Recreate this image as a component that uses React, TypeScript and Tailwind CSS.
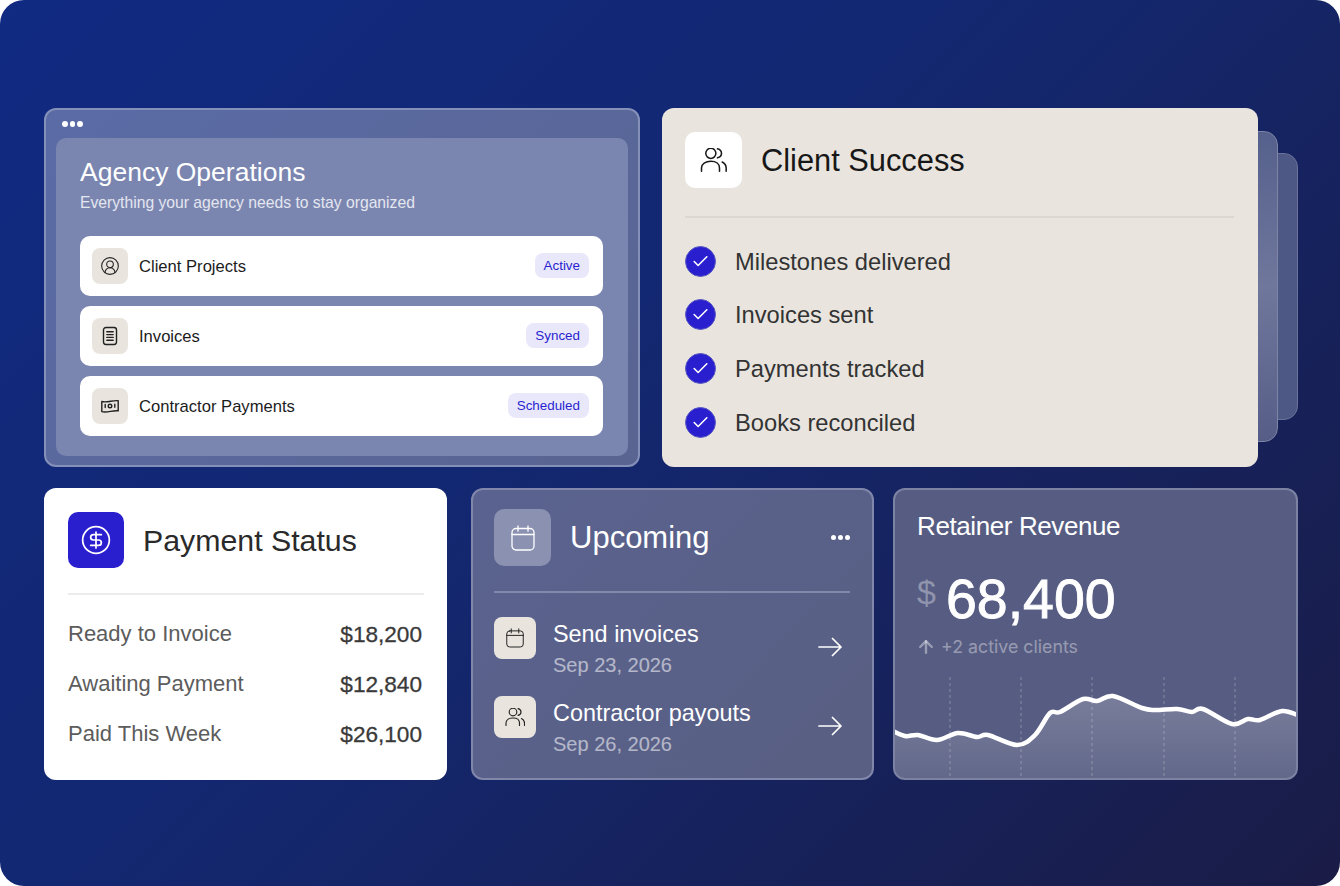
import { ArrowUp, Check, CircleDollarSign, CircleUserRound } from "lucide-react";
import type { ReactNode } from "react";

const font = { sans: "font-['Liberation_Sans',Arial,sans-serif]" };

const chartPoints: [number, number][] = [
  [891, 732], [905, 738], [918, 737], [937, 742], [958, 735], [977, 739], [988, 737], [1017, 747],
  [1035, 737], [1050, 715], [1060, 714], [1083, 701], [1097, 703], [1113, 698], [1142, 710],
  [1155, 712], [1177, 711], [1192, 714], [1203, 711], [1232, 726], [1248, 721], [1260, 722],
  [1282, 713], [1300, 718],
];

// catmull-rom through the points so the line stays soft
const smooth = (pts: [number, number][]) => {
  let d = `M${pts[0][0]} ${pts[0][1]}`;
  for (let i = 0; i < pts.length - 1; i++) {
    const p0 = pts[i - 1] ?? pts[i];
    const p1 = pts[i];
    const p2 = pts[i + 1];
    const p3 = pts[i + 2] ?? p2;
    const c1x = p1[0] + (p2[0] - p0[0]) / 6;
    const c1y = p1[1] + (p2[1] - p0[1]) / 6;
    const c2x = p2[0] - (p3[0] - p1[0]) / 6;
    const c2y = p2[1] - (p3[1] - p1[1]) / 6;
    d += ` C${c1x} ${c1y} ${c2x} ${c2y} ${p2[0]} ${p2[1]}`;
  }
  return d;
};

const linePath = smooth(chartPoints);

const DocIcon = () => (
  <svg width="20" height="20" viewBox="0 0 20 20" fill="none" stroke="#222" strokeWidth="1.4" strokeLinecap="round">
    <rect x="3.500" y="1.500" width="13" height="17" rx="2.400" />
    <path d="M6.800 5.800h6.400M6.800 8.600h6.400M6.800 11.400h6.400M6.800 14.200h6.400" />
  </svg>
);

const CashIcon = () => (
  <svg width="20" height="20" viewBox="0 0 20 20" fill="none" stroke="#222" strokeWidth="1.4" strokeLinecap="round" strokeLinejoin="round">
    <path d="M1.800 5.500c5.300 1.500 11-1.500 16.400-.8v10.200c-5.400-.8-11.100 2.100-16.400.7z" />
    <circle cx="10" cy="10" r="1.800" />
    <path d="M5.200 8.500v3M14.800 8.200v3" />
  </svg>
);

const UsersIcon = ({ width, height, color }: { width: number; height: number; color: string }) => (
  <svg width={width} height={height} viewBox="0 0 20 18" fill="none" stroke={color} strokeWidth="1.150" strokeLinecap="round" strokeLinejoin="round">
    <ellipse cx="8" cy="4" rx="3.800" ry="3.800" />
    <path d="M13 .6C15 1.100 16 2.500 16 4S15 6.900 13 7.400" />
    <path d="M1 17.400V15c0-3 3-5 7-5s6.500 2 6.500 5v2.400" />
    <path d="M16.500 10.500c2 1 3 2.500 3 4.500v2.400" />
  </svg>
);

const CalendarIcon = ({ width, height, color }: { width: number; height: number; color: string }) => (
  <svg width={width} height={height} viewBox="0 0 24 26" fill="none" stroke={color} strokeWidth="1.300" strokeLinecap="round" strokeLinejoin="round">
    <rect x="1" y="3.500" width="22" height="21.500" rx="4" />
    <path d="M1 9.500h22M7 .8v5.400M17 .8v5.400" />
  </svg>
);

const ArrowIcon = () => (
  <svg width="24" height="20" viewBox="0 0 24 20" fill="none" stroke="white" strokeWidth="1.7" strokeLinecap="round" strokeLinejoin="round">
    <path d="M1 10h22M14.500 1.500 23 10l-8.500 8.500" />
  </svg>
);

const Dots = ({ className }: { className: string }) => (
  <div className={`flex ${className}`}>
    <span className="size-[5.500px] rounded-full bg-white" />
    <span className="size-[5.500px] rounded-full bg-white" />
    <span className="size-[5.500px] rounded-full bg-white" />
  </div>
);

const projects: { name: string; badge: string; icon: ReactNode }[] = [
  { name: "Client Projects", badge: "Active", icon: <CircleUserRound size={20} strokeWidth={1.3} color="#222" /> },
  { name: "Invoices", badge: "Synced", icon: <DocIcon /> },
  { name: "Contractor Payments", badge: "Scheduled", icon: <CashIcon /> },
];

const checks = ["Milestones delivered", "Invoices sent", "Payments tracked", "Books reconciled"];

const payments = [
  { label: "Ready to Invoice", value: "$18,200" },
  { label: "Awaiting Payment", value: "$12,840" },
  { label: "Paid This Week", value: "$26,100" },
];

const upcoming = [
  { title: "Send invoices", date: "Sep 23, 2026", icon: <CalendarIcon width={18} height={20} color="#222" /> },
  { title: "Contractor payouts", date: "Sep 26, 2026", icon: <UsersIcon width={20} height={18} color="#222" /> },
];

export default function App() {
  return (
    <div className="w-[1340px] h-[886px] bg-white">
      <div className={`w-full h-full rounded-[24px] overflow-hidden bg-[linear-gradient(135deg,#112a82_0%,#132872_42%,#1a1c46_100%)] pt-[108px] pl-[44px] ${font.sans}`}>
        <div className="flex gap-[22px]">
          <section className="w-[596px] h-[359px] rounded-[12px] border-2 border-[#8490b8] bg-[linear-gradient(135deg,#5a6ba6,#596491)] px-[10px] pt-[5px]">
            <Dots className="gap-[2px] ml-[6px] mt-[6px] mb-[11px]" />
            <div className="h-[318px] rounded-[10px] bg-[#7a85b0] pl-[24px] pr-[25px] pt-[18px]">
              <h2 className="text-[26.500px] leading-[32px] text-white">Agency Operations</h2>
              <p className="mt-[5px] text-[15.700px] leading-[20px] text-white/80">Everything your agency needs to stay organized</p>
              <div className="mt-[23px] flex flex-col gap-[10px]">
                {projects.map((p) => (
                  <div key={p.name} className="h-[60px] rounded-[10px] bg-white flex items-center pl-[12px] pr-[14px]">
                    <div className="size-[36px] rounded-[8px] bg-[#e9e5de] flex items-center justify-center">{p.icon}</div>
                    <span className="ml-[11px] pt-[3px] text-[16.600px] text-[#1c1c1c]">{p.name}</span>
                    <span className="ml-auto h-[25px] rounded-[8px] bg-[#e9e8fb] px-[9px] pt-[2px] flex items-center text-[13.400px] text-[#2a1fcf]">{p.badge}</span>
                  </div>
                ))}
              </div>
            </div>
          </section>

          <div className="relative w-[596px] h-[359px]">
            <div className="absolute left-[580px] top-[45px] w-[56px] h-[267px] rounded-[14px] border border-[#6a7198] bg-[#4e5884]" />
            <div className="absolute left-[560px] top-[23px] w-[56px] h-[311px] rounded-[14px] border border-[#7d84a6] bg-[linear-gradient(180deg,#55608c,#6f779c_50%,#565e88)]" />
            <section className="relative h-full rounded-[12px] bg-[#e9e5de] px-[23px] pt-[24px]">
              <div className="flex items-center gap-[19px]">
                <div className="w-[57px] h-[56px] rounded-[10px] bg-white flex items-center justify-center">
                  <UsersIcon width={27} height={24} color="#1a1a1a" />
                </div>
                <h2 className="pt-[2px] text-[30.800px] leading-[40px] text-[#171717]">Client Success</h2>
              </div>
              <div className="mt-[28px] h-[2px] w-[549px] bg-[#dcd8d1]" />
              <ul className="mt-[28px] flex flex-col gap-[23.700px]">
                {checks.map((c) => (
                  <li key={c} className="flex items-center h-[30px]">
                    <span className="size-[31px] rounded-full bg-[#2a1fcf] border border-[#5a5ac0] flex items-center justify-center">
                      <Check size={19} strokeWidth={2} color="white" />
                    </span>
                    <span className="ml-[19px] pt-[3px] text-[23.700px] text-[#333]">{c}</span>
                  </li>
                ))}
              </ul>
            </section>
          </div>
        </div>

        <div className="flex mt-[21px]">
          <section className="w-[403px] h-[292px] rounded-[12px] bg-white px-[24px] pt-[24px]">
            <div className="flex items-center gap-[19px]">
              <div className="size-[56px] rounded-[10px] bg-[#2a1fcf] flex items-center justify-center">
                <CircleDollarSign size={32} strokeWidth={1.3} color="white" />
              </div>
              <h2 className="pt-[2px] text-[30.300px] leading-[40px] text-[#2a2a2a]">Payment Status</h2>
            </div>
            <div className="mt-[25px] h-[2px] w-[356px] bg-[#ececec]" />
            <div className="mt-[24px] flex flex-col gap-[20px] pr-[1px]">
              {payments.map((p) => (
                <div key={p.label} className="flex items-center justify-between h-[30px]">
                  <span className="pb-[2px] text-[22px] text-[#5c5c5c]">{p.label}</span>
                  <span className="pt-[2px] text-[22.600px] text-[#3a3a3a] [-webkit-text-stroke:0.3px_#3a3a3a]">{p.value}</span>
                </div>
              ))}
            </div>
          </section>

          <section className="ml-[24px] w-[403px] h-[292px] rounded-[12px] border-2 border-[#8087aa] bg-[linear-gradient(135deg,#5a6390,#595f82)] px-[21px] pt-[19px]">
            <div className="flex items-center gap-[19px]">
              <div className="size-[57px] rounded-[10px] bg-[#8b91b1] flex items-center justify-center">
                <CalendarIcon width={24} height={26} color="white" />
              </div>
              <h2 className="text-[31px] leading-[40px] text-white">Upcoming</h2>
              <Dots className="gap-[1.500px] ml-auto mr-[1px]" />
            </div>
            <div className="mt-[25px] h-[2px] w-[356px] bg-[#8389ab]" />
            <div className="mt-[24px] flex flex-col gap-[18px]">
              {upcoming.map((u) => (
                <div key={u.title} className="flex items-start">
                  <div className="size-[42px] rounded-[8px] bg-[#e9e5de] flex items-center justify-center">{u.icon}</div>
                  <div className="ml-[17px] flex-1 pt-[3px]">
                    <div className="text-[23.400px] leading-[28px] text-white">{u.title}</div>
                    <div className="mt-[4px] text-[20px] leading-[26px] text-white/55">{u.date}</div>
                  </div>
                  <div className="mt-[20px] mr-[9px]"><ArrowIcon /></div>
                </div>
              ))}
            </div>
          </section>

          <section className="ml-[19px] w-[405px] h-[292px] rounded-[12px] border-2 border-[#7c82a2] bg-[#575d82] overflow-hidden flex flex-col">
            <div className="px-[22px] pt-[19px]">
              <h2 className="text-[26px] leading-[34px] tracking-[-0.4px] text-white">Retainer Revenue</h2>
              <div className="mt-[24px] flex items-start">
                <span className="mt-[5px] text-[34px] leading-[40px] text-white/35">$</span>
                <span className="ml-[10px] text-[55.500px] leading-[64px] text-white [-webkit-text-stroke:0.9px_white]">68,400</span>
              </div>
              <div className="mt-[4px] flex items-center text-[17.800px] leading-[24px] text-white/40 font-['Inter',sans-serif]">
                <ArrowUp size={20} strokeWidth={2.8} className="-ml-[1px]" />
                <span className="ml-[5px]">+2 active clients</span>
              </div>
            </div>
            <svg className="mt-auto block" width="401" height="101" viewBox="895 679 401 101">
              <defs>
                <linearGradient id="area" x1="0" y1="0" x2="0" y2="1">
                  <stop offset="0" stopColor="white" stopOpacity="0.2" />
                  <stop offset="1" stopColor="white" stopOpacity="0.07" />
                </linearGradient>
              </defs>
              <path d={`${linePath} L1300 780 L891 780 Z`} fill="url(#area)" />
              {[950, 1021, 1092, 1164, 1235].map((x) => (
                <line key={x} x1={x} x2={x} y1={679} y2={780} stroke="white" strokeOpacity="0.28" strokeDasharray="3 3" />
              ))}
              <path d={linePath} fill="none" stroke="white" strokeWidth="4.500" strokeLinecap="round" />
            </svg>
          </section>
        </div>
      </div>
    </div>
  );
}
